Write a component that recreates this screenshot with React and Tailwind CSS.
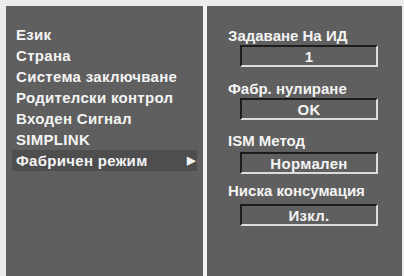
export default function App() {
  const items = [
    'Език',
    'Страна',
    'Система заключване',
    'Родителски контрол',
    'Входен Сигнал',
    'SIMPLINK',
  ];

  const Box = ({ children }) => (
    <div className="ml-[33px] w-[138px] h-[22px] border-2 border-t-[#1c1c1c] border-l-[#1c1c1c] border-b-[#dcdcdc] border-r-[#dcdcdc] flex items-center justify-center tracking-[0.3px]">
      {children}
    </div>
  );

  return (
    <div
      className="w-[404px] h-[276px] bg-[#ececec] flex pt-[6px] pl-[6px] pr-[2px] overflow-hidden text-[15px] font-bold text-[#f4f4f4] leading-none"
      style={{ fontFamily: '"Liberation Sans", Arial, sans-serif' }}
    >
      {/* left menu */}
      <div className="w-[197px] h-full bg-[#5f5f5f] pt-[18px] tracking-[0.3px]">
        {items.map((label) => (
          <div key={label} className="h-[21px] flex items-center pl-[10px]">
            {label}
          </div>
        ))}
        <div className="h-[21px] mx-[6px] bg-[#4e4e4e] flex items-center justify-between pl-[4px] pr-[2px]">
          <span>Фабричен режим</span>
          <span className="text-[11px]">▶</span>
        </div>
      </div>

      <div className="w-[4px] h-full bg-[#f4f4f4]" />

      {/* right panel */}
      <div className="flex-1 h-full bg-[#5f5f5f] pt-[20px]">
        <div className="h-[18px] flex items-center pl-[21px] mb-[1px]">Задаване На ИД</div>
        <Box>1</Box>
        <div className="h-[18px] flex items-center pl-[21px] mt-[12px] mb-[1px]">Фабр. нулиране</div>
        <Box>OK</Box>
        <div className="h-[18px] flex items-center pl-[21px] mt-[11px] mb-[3px]">ISM Метод</div>
        <Box>Нормален</Box>
        <div className="h-[18px] flex items-center pl-[21px] mt-[7px] mb-[5px]">Ниска консумация</div>
        <Box>Изкл.</Box>
      </div>
    </div>
  );
}
